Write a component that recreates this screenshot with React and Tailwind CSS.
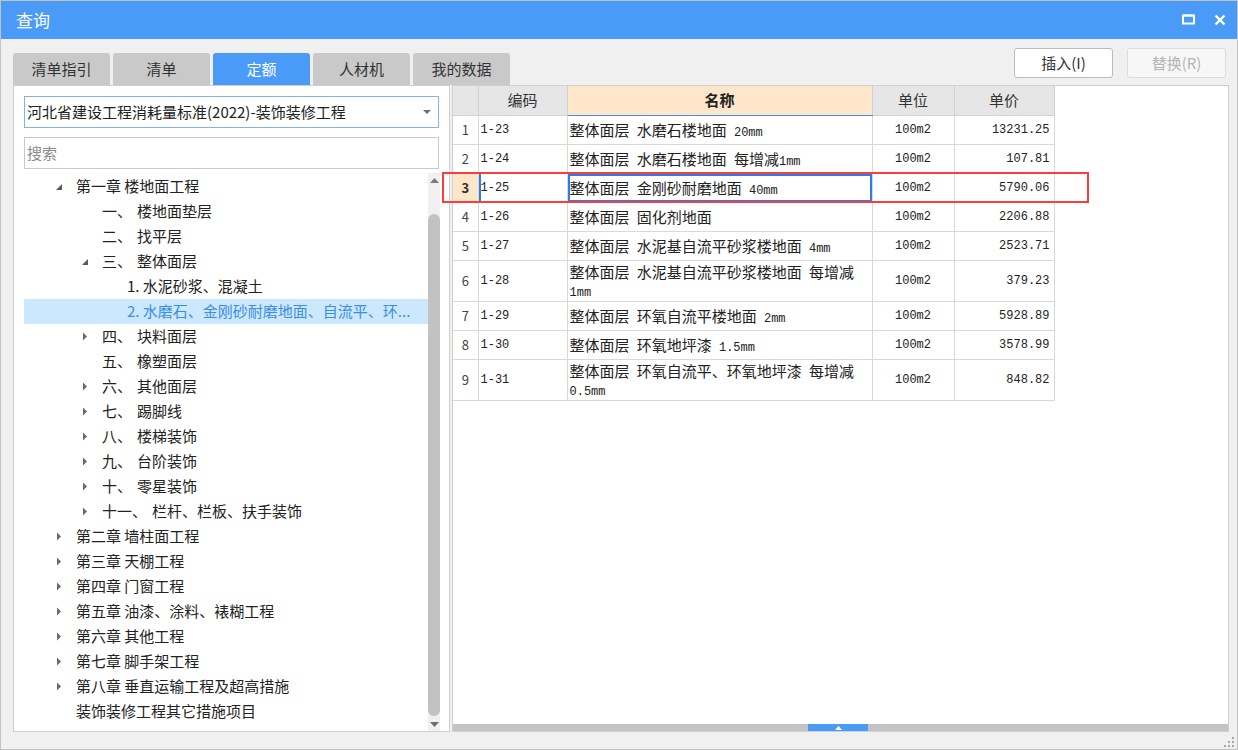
import React from 'react';

const TABS = ['清单指引', '清单', '定额', '人材机', '我的数据'];

const TREE = [
  { lv: 0, arrow: 'open', num: '', text: '第一章 楼地面工程' },
  { lv: 1, arrow: '', num: '一、', text: '楼地面垫层' },
  { lv: 1, arrow: '', num: '二、', text: '找平层' },
  { lv: 1, arrow: 'open', num: '三、', text: '整体面层' },
  { lv: 2, arrow: '', num: '', text: '1. 水泥砂浆、混凝土' },
  { lv: 2, arrow: '', num: '', text: '2. 水磨石、金刚砂耐磨地面、自流平、环...', active: true },
  { lv: 1, arrow: 'closed', num: '四、', text: '块料面层' },
  { lv: 1, arrow: '', num: '五、', text: '橡塑面层' },
  { lv: 1, arrow: 'closed', num: '六、', text: '其他面层' },
  { lv: 1, arrow: 'closed', num: '七、', text: '踢脚线' },
  { lv: 1, arrow: 'closed', num: '八、', text: '楼梯装饰' },
  { lv: 1, arrow: 'closed', num: '九、', text: '台阶装饰' },
  { lv: 1, arrow: 'closed', num: '十、', text: '零星装饰' },
  { lv: 1, arrow: 'closed', num: '十一、', text: '栏杆、栏板、扶手装饰' },
  { lv: 0, arrow: 'closed', num: '', text: '第二章 墙柱面工程' },
  { lv: 0, arrow: 'closed', num: '', text: '第三章 天棚工程' },
  { lv: 0, arrow: 'closed', num: '', text: '第四章 门窗工程' },
  { lv: 0, arrow: 'closed', num: '', text: '第五章 油漆、涂料、裱糊工程' },
  { lv: 0, arrow: 'closed', num: '', text: '第六章 其他工程' },
  { lv: 0, arrow: 'closed', num: '', text: '第七章 脚手架工程' },
  { lv: 0, arrow: 'closed', num: '', text: '第八章 垂直运输工程及超高措施' },
  { lv: 0, arrow: '', num: '', text: '装饰装修工程其它措施项目' },
];

const INDENT = ['w-[27px]', 'w-[53px]', 'w-[78px]'];

const ROWS = [
  { n: 1, code: '1-23', name: ['整体面层 水磨石楼地面 20mm'], price: '13231.25' },
  { n: 2, code: '1-24', name: ['整体面层 水磨石楼地面 每增减1mm'], price: '107.81' },
  { n: 3, code: '1-25', name: ['整体面层 金刚砂耐磨地面 40mm'], price: '5790.06', sel: true },
  { n: 4, code: '1-26', name: ['整体面层 固化剂地面'], price: '2206.88' },
  { n: 5, code: '1-27', name: ['整体面层 水泥基自流平砂浆楼地面 4mm'], price: '2523.71' },
  { n: 6, code: '1-28', name: ['整体面层 水泥基自流平砂浆楼地面 每增减', '1mm'], price: '379.23' },
  { n: 7, code: '1-29', name: ['整体面层 环氧自流平楼地面 2mm'], price: '5928.89' },
  { n: 8, code: '1-30', name: ['整体面层 环氧地坪漆 1.5mm'], price: '3578.99' },
  { n: 9, code: '1-31', name: ['整体面层 环氧自流平、环氧地坪漆 每增减', '0.5mm'], price: '848.82' },
];

const MONO = "font-['Liberation_Mono',monospace] text-[12px] whitespace-pre";

// ascii runs (spaces included) in the grid use a narrow mono face, CJK stays in the sans stack
function Mixed({ text }) {
  return text.split(/([\x20-\x7e]+)/).map((part, i) =>
    /[\x20-\x7e]/.test(part) ? <span key={i} className={MONO}>{part}</span> : part
  );
}

function Arrow({ type }) {
  if (type === 'open')
    return (
      <svg width="8" height="8" viewBox="0 0 8 8"><polygon points="7,1 7,7 1,7" fill="#5a5a5a" /></svg>
    );
  if (type === 'closed')
    return (
      <svg width="6" height="9" viewBox="0 0 6 9"><polygon points="1,0.5 5,4.5 1,8.5" fill="#6a6a6a" /></svg>
    );
  return null;
}

export default function App() {
  return (
    <div className="relative w-[1238px] h-[750px] flex flex-col bg-[#f0f0f0] border border-[#c3c3c3] font-['Noto_Sans_CJK_SC','Noto_Sans',sans-serif] text-[#222] overflow-hidden">
      {/* title bar */}
      <div className="h-[39px] -mt-px -mx-px bg-[#4a9bf8] flex items-center pl-[16px] pr-[12px] text-white rounded-t-[3px]">
        <span className="text-[17px]">查询</span>
        <div className="ml-auto flex items-center gap-[19px]">
          <svg width="13" height="11" viewBox="0 0 13 11">
            <rect x="1" y="1.5" width="11" height="8" fill="none" stroke="white" strokeWidth="2" />
            <rect x="1" y="0.5" width="11" height="2" fill="white" />
          </svg>
          <svg width="12" height="12" viewBox="0 0 12 12">
            <path d="M1.5 1.5 L10.5 10.5 M10.5 1.5 L1.5 10.5" stroke="white" strokeWidth="2.4" />
          </svg>
        </div>
      </div>

      {/* tabs + buttons */}
      <div className="h-[46px] flex items-end pl-[12px] pr-[11px]">
        <div className="flex gap-[3px]">
          {TABS.map((t) => (
            <div
              key={t}
              className={
                t === '定额'
                  ? 'w-[97px] h-[32px] rounded-t-[3px] bg-[#4a9bf8] text-white text-[15px] flex items-center justify-center'
                  : 'w-[97px] h-[32px] rounded-t-[3px] bg-[#c9c9c9] text-[#333] text-[15px] flex items-center justify-center'
              }
            >
              {t}
            </div>
          ))}
        </div>
        <div className="ml-auto self-start mt-[9px] flex gap-[14px]">
          <button className="w-[99px] h-[30px] rounded-[3px] bg-white border border-[#bcbcbc] text-[15px] text-[#333]">插入(I)</button>
          <button className="w-[99px] h-[30px] rounded-[3px] bg-[#f7f7f7] border border-[#dcdcdc] text-[15px] text-[#b4b4b4]">替换(R)</button>
        </div>
      </div>

      {/* panels */}
      <div className="h-[647px] flex pl-[12px]">
        {/* left */}
        <div className="w-[437px] bg-white border border-[#cfcfcf] flex flex-col px-[10px] pt-[10px]">
          <div className="h-[32px] border border-[#7fb4ea] flex items-center pl-[2px] pr-[7px] text-[15px] text-[#222]">
            <span>河北省建设工程消耗量标准(2022)-装饰装修工程</span>
            <svg className="ml-auto" width="8" height="4" viewBox="0 0 8 4"><polygon points="0,0 8,0 4,4" fill="#6e6e6e" /></svg>
          </div>
          <div className="mt-[9px] h-[32px] border border-[#c8c8c8] flex items-center pl-[2px] text-[15px] text-[#8a8a8a]">搜索</div>
          <div className="mt-[4px] flex flex-1 min-h-0">
            <div className="w-[404px] pt-px">
              {TREE.map((r, i) => (
                <div
                  key={i}
                  className={
                    'w-[404px] h-[25px] flex items-center text-[15px] ' +
                    (r.active ? 'bg-[#cce8ff] text-[#3b8de6]' : 'text-[#222]')
                  }
                >
                  <div className={'shrink-0 h-full ' + INDENT[r.lv]} />
                  <div className="w-[16px] flex justify-center">
                    <Arrow type={r.arrow} />
                  </div>
                  <div className="ml-[9px] flex whitespace-nowrap">
                    {r.num && <span>{r.num}</span>}
                    <span className={r.num ? 'ml-[5px]' : ''}>{r.text}</span>
                  </div>
                </div>
              ))}
            </div>
            {/* scrollbar */}
            <div className="w-[15px] bg-[#f0f0f0] flex flex-col items-center pt-[5px] pb-[4px]">
              <svg width="9" height="5" viewBox="0 0 9 5"><polygon points="0,5 9,5 4.5,0" fill="#7b7b7b" /></svg>
              <div className="mt-[31px] w-[12px] flex-1 rounded-full bg-[#c2c2c2]" />
              <svg className="mt-[6px]" width="9" height="5" viewBox="0 0 9 5"><polygon points="0,0 9,0 4.5,5" fill="#6b6b7b" /></svg>
            </div>
          </div>
        </div>

        {/* right */}
        <div className="ml-[2px] w-[777px] bg-white border border-[#cfcfcf] flex flex-col">
          <table className="table-fixed border-collapse w-[601px] text-[15px] text-[#222]">
            <colgroup>
              <col className="w-[25px]" />
              <col className="w-[89px]" />
              <col className="w-[305px]" />
              <col className="w-[82px]" />
              <col className="w-[100px]" />
            </colgroup>
            <thead>
              <tr>
                <th className="h-[29px] p-0 bg-[#e6e6e6] border border-[#d2d2d2] border-t-0 border-l-0" />
                <th className="h-[29px] p-0 bg-[#e6e6e6] border border-[#d2d2d2] border-t-0 font-normal text-[#333]">编码</th>
                <th className="h-[29px] p-0 bg-[#fde6c9] border border-[#d2d2d2] border-t-0 border-b-[#3f8ee8] font-bold text-[#222]">名称</th>
                <th className="h-[29px] p-0 bg-[#e6e6e6] border border-[#d2d2d2] border-t-0 font-normal text-[#333]">单位</th>
                <th className="h-[29px] p-0 bg-[#e6e6e6] border border-[#d2d2d2] border-t-0 font-normal text-[#333]">单价</th>
              </tr>
            </thead>
            <tbody>
              {ROWS.map((r) => {
                const h = r.name.length > 1 ? 'h-[40px]' : 'h-[28px]';
                return (
                  <tr key={r.n}>
                    <td
                      className={
                        'p-0 border border-[#d9d9d9] border-l-0 text-[13px] ' +
                        (r.sel ? 'bg-[#fde6c9] font-bold text-[#333]' : 'text-[#444]')
                      }
                    >
                      <div className={'flex items-center justify-center overflow-hidden ' + h}>{r.n}</div>
                    </td>
                    <td className={'p-0 border border-[#d9d9d9] ' + (r.sel ? 'shadow-[inset_2px_0_0_#2b7de9]' : '')}>
                      <div className={'flex items-center pl-[2px] overflow-hidden ' + h}>
                        <span className={MONO}>{r.code}</span>
                      </div>
                    </td>
                    <td className={'p-0 border border-[#d9d9d9] ' + (r.sel ? 'shadow-[inset_0_0_0_2px_#2b7de9]' : '')}>
                      <div className={'flex flex-col justify-center pl-[2px] overflow-hidden ' + h}>
                        {r.name.map((l, i) => (
                          <div key={i} className="whitespace-nowrap h-[18px] leading-[18px]">
                            <Mixed text={l} />
                          </div>
                        ))}
                      </div>
                    </td>
                    <td className="p-0 border border-[#d9d9d9]">
                      <div className={'flex items-center justify-center overflow-hidden ' + h}>
                        <span className={MONO}>100m2</span>
                      </div>
                    </td>
                    <td className="p-0 border border-[#d9d9d9]">
                      <div className={'flex items-center justify-end pr-[4px] overflow-hidden ' + h}>
                        <span className={MONO}>{r.price}</span>
                      </div>
                    </td>
                  </tr>
                );
              })}
            </tbody>
          </table>
          <div className="flex-1" />
          <div className="h-[7px] bg-[#c4c4c4] flex">
            <div className="ml-[355px] w-[60px] bg-[#4a9bf8] flex items-center justify-center">
              <svg width="7" height="4" viewBox="0 0 7 4"><polygon points="0,4 7,4 3.5,0" fill="white" /></svg>
            </div>
          </div>
        </div>
      </div>

      {/* resize grip */}
      <div className="flex-1 flex justify-end items-end pr-[3px] pb-[2px]">
        <svg width="10" height="10" viewBox="0 0 10 10" fill="#a8a8a8">
          <rect x="8" y="0" width="2" height="2" />
          <rect x="4" y="4" width="2" height="2" />
          <rect x="8" y="4" width="2" height="2" />
          <rect x="0" y="8" width="2" height="2" />
          <rect x="4" y="8" width="2" height="2" />
          <rect x="8" y="8" width="2" height="2" />
        </svg>
      </div>

      {/* annotation box over the selected row */}
      <div className="absolute left-[441px] top-[171px] w-[647px] h-[31px] border-2 border-[#ff3b3b] pointer-events-none" />
    </div>
  );
}
